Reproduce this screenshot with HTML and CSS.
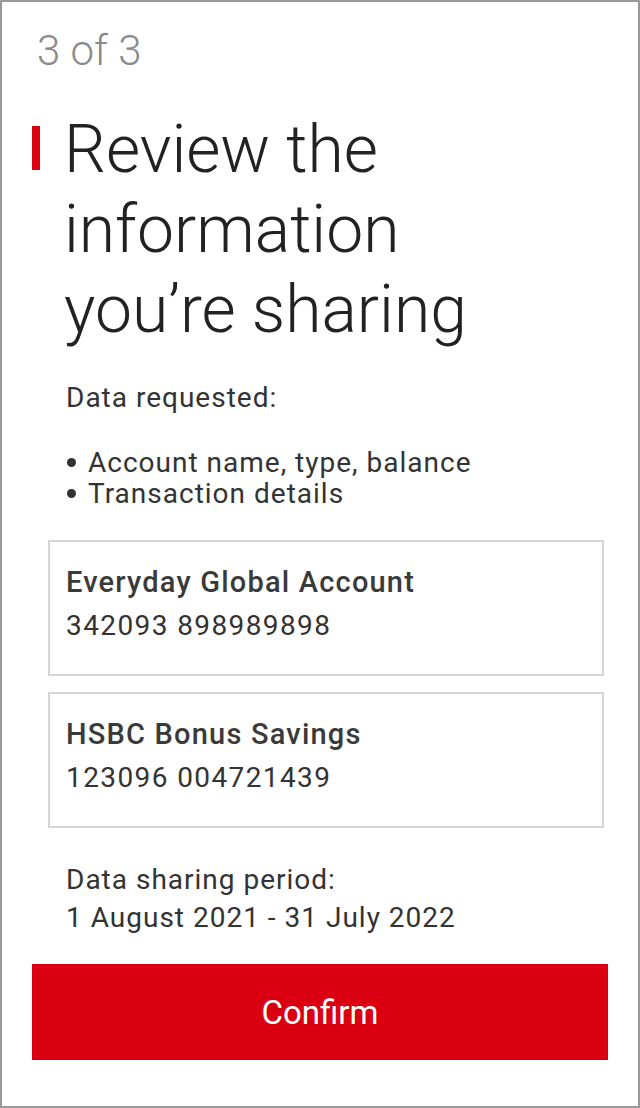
FILE: index.html
```html
<!DOCTYPE html>
<html lang="en">
<head>
  <meta charset="UTF-8">
  <meta name="viewport" content="width=device-width, initial-scale=1.0">
  <title>Review the information you're sharing</title>
  <link rel="stylesheet" href="styles.css">
</head>
<body>
  <div class="screen">
    <div class="step">3 of 3</div>

    <h1 class="title">Review the information you’re sharing</h1>

    <div class="content">
      <p class="label">Data requested:</p>
      <ul class="items">
        <li>Account name, type, balance</li>
        <li>Transaction details</li>
      </ul>
    </div>

    <div class="accounts">
      <div class="account">
        <div class="account-name">Everyday Global Account</div>
        <div class="account-number">342093 898989898</div>
      </div>
      <div class="account">
        <div class="account-name">HSBC Bonus Savings</div>
        <div class="account-number">123096 004721439</div>
      </div>
    </div>

    <div class="content period">
      <p>Data sharing period:</p>
      <p>1 August 2021 - 31 July 2022</p>
    </div>

    <button class="confirm">Confirm</button>
  </div>
</body>
</html>
```

FILE: styles.css
```css
html, body {
  margin: 0;
  height: 100%;
}

body {
  font-family: Roboto, "Liberation Sans", sans-serif;
  color: #333;
  background-color: #fff;
}

.screen {
  box-sizing: border-box;
  height: 100%;
  border: 2px solid #9a9a9a;
  padding: 0 30px;
}

.step {
  padding-top: 25px;
  padding-left: 5px;
  font-size: 42px;
  line-height: 48px;
  font-weight: 300;
  color: #8a8a8a;
}

.title {
  position: relative;
  max-width: 460px;
  margin: 35px 0 0 0;
  padding-left: 32px;
  font-size: 66px;
  line-height: 80px;
  font-weight: 300;
  color: #222;
}

/* red marker next to the first line only */
.title::before {
  content: "";
  position: absolute;
  left: 0;
  top: 16px;
  width: 8px;
  height: 44px;
  background-color: #db0011;
}

.content {
  padding-left: 34px;
  font-size: 28px;
  line-height: 31px;
  letter-spacing: 1px;
}

.label {
  margin: 32px 0 0 0;
}

.items {
  list-style: none;
  margin: 34px 0 0 0;
  padding: 0;
}

.items li::before {
  content: "";
  display: inline-block;
  width: 9px;
  height: 9px;
  margin: 0 12px 4px 1px;
  border-radius: 50%;
  background-color: #333;
  vertical-align: middle;
}

.accounts {
  display: flex;
  flex-direction: column;
  gap: 16px;
  margin: 31px 4px 0 16px;
}

.account {
  border: 2px solid #d6d6d6;
  height: 136px;
  box-sizing: border-box;
  padding: 22px 16px;
}

.account-name {
  font-size: 29px;
  line-height: 36px;
  font-weight: 500;
  letter-spacing: 1.2px;
  color: #3a3a3a;
}

.account-number {
  margin-top: 10px;
  font-size: 28px;
  line-height: 32px;
  letter-spacing: 1.4px;
}

.period {
  margin-top: 33px;
  line-height: 38px;
}

.period p {
  margin: 0;
}

.confirm {
  display: block;
  width: 100%;
  height: 96px;
  margin-top: 27px;
  border: none;
  background-color: #db0011;
  color: #fff;
  font-family: inherit;
  font-size: 33px;
  cursor: pointer;
}
```
